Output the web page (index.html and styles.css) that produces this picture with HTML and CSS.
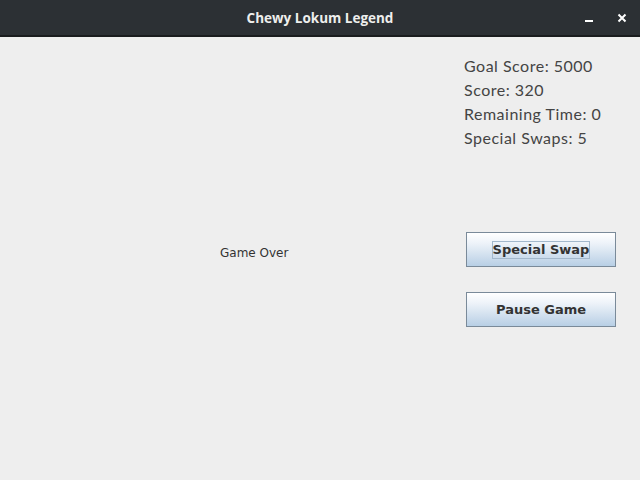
FILE: index.html
```html
<!DOCTYPE html>
<html>
<head>
<meta charset="utf-8">
<link rel="stylesheet" href="styles.css">
</head>
<body>
<div class="window">
  <div class="titlebar">
    <div class="title">Chewy Lokum Legend</div>
    <div class="controls">
      <span class="ctl min"><svg width="10" height="10" viewBox="0 0 10 10"><rect x="1" y="7" width="8" height="2" fill="#ffffff"/></svg></span>
      <span class="ctl close"><svg width="10" height="10" viewBox="0 0 10 10"><path d="M1.5 1.5 L8.5 8.5 M8.5 1.5 L1.5 8.5" stroke="#ffffff" stroke-width="2"/></svg></span>
    </div>
  </div>
  <div class="content">
    <div class="board">
      <div class="gameover">Game Over</div>
    </div>
    <div class="side">
      <div class="stats">
        <div class="stat">Goal Score: 5000</div>
        <div class="stat">Score: 320</div>
        <div class="stat">Remaining Time: 0</div>
        <div class="stat">Special Swaps: 5</div>
      </div>
      <div class="buttons">
        <button class="btn"><span class="focus">Special Swap</span></button>
        <button class="btn"><span class="label">Pause Game</span></button>
      </div>
    </div>
  </div>
</div>
</body>
</html>
```
FILE: styles.css
```css
html, body {
  margin: 0;
  padding: 0;
  width: 640px;
  height: 480px;
  overflow: hidden;
  background: #eeeeee;
}
.window {
  width: 640px;
  height: 480px;
  display: flex;
  flex-direction: column;
}
.titlebar {
  height: 35px;
  background: #2c3034;
  border-bottom: 2px solid #1a1c1e;
  display: flex;
  align-items: center;
  justify-content: center;
  position: relative;
}
.title {
  font-family: "Open Sans", "DejaVu Sans", sans-serif;
  font-weight: 700;
  font-size: 13.5px;
  color: #eeeeec;
}
.controls {
  position: absolute;
  right: 0;
  top: 0;
  height: 35px;
  display: flex;
  align-items: center;
}
.ctl {
  width: 33px;
  display: flex;
  justify-content: center;
  align-items: center;
}
.ctl.close { margin-right: 2px; }
.content {
  flex: 1;
  display: flex;
  background: #eeeeee;
}
.board {
  width: 464px;
  padding-top: 209px;
  padding-left: 220px;
  box-sizing: border-box;
}
.gameover {
  font-family: "DejaVu Sans", sans-serif;
  font-size: 12px;
  color: #333333;
  line-height: 14px;
}
.side {
  flex: 1;
  display: flex;
  flex-direction: column;
}
.stats {
  padding-top: 17px;
  display: flex;
  flex-direction: column;
}
.stat {
  font-family: "Lato", sans-serif;
  font-size: 16px;
  letter-spacing: 0.5px;
  color: #444444;
  line-height: 24px;
  height: 24px;
}
.buttons {
  margin-top: 82px;
  padding-left: 2px;
  display: flex;
  flex-direction: column;
  gap: 25px;
}
.btn {
  width: 150px;
  height: 35px;
  margin: 0;
  padding: 0;
  border: 1px solid #7a8a99;
  background: linear-gradient(to bottom, #ffffff 0%, #eef3f9 30%, #b8cfe5 100%);
  font-family: "DejaVu Sans", sans-serif;
  font-weight: 700;
  font-size: 13px;
  color: #333333;
  display: flex;
  align-items: center;
  justify-content: center;
  box-sizing: border-box;
}
.focus {
  border: 1px solid #a3b8cc;
  padding: 1px 0px;
  line-height: 14px;
}
.label {
  line-height: 14px;
}
```
